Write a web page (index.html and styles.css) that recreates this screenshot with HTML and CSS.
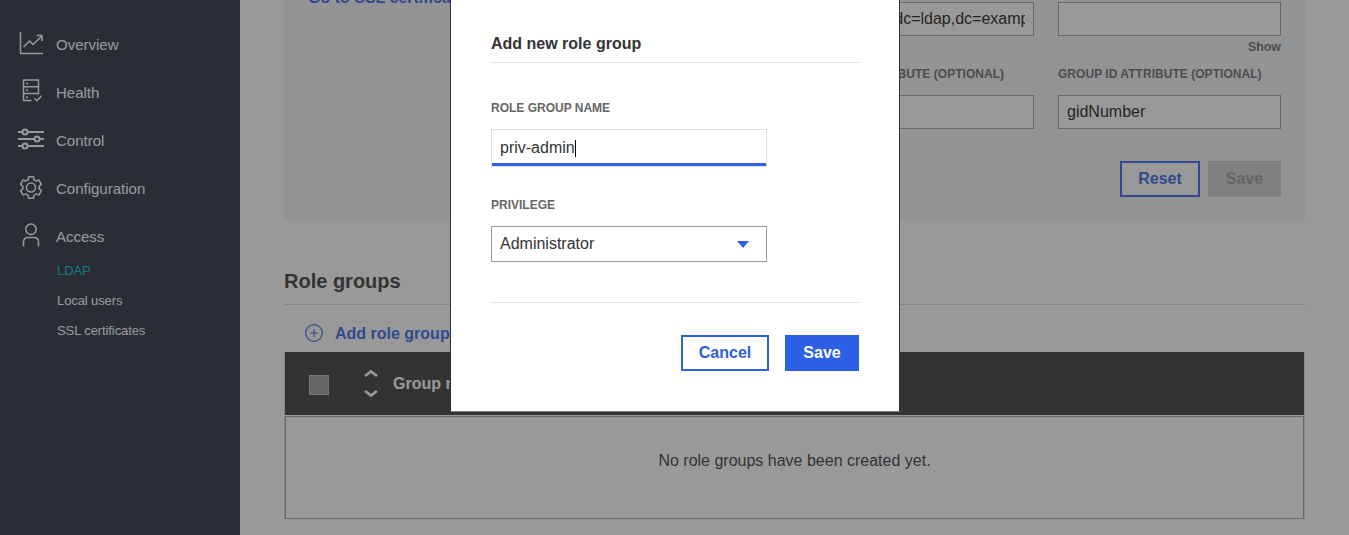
FILE: index.html
```html
<!DOCTYPE html>
<html lang="en">
<head>
<meta charset="utf-8">
<title>LDAP</title>
<link rel="stylesheet" href="styles.css">
</head>
<body>
<div class="app">
  <nav class="sidebar">
    <a class="nav-item"><svg class="nav-icon" viewBox="0 0 26 26"><path d="M2.500 2v21.500H25M5.500 17l6-6 3.500 3.500 9-8.500M18.500 5.500H24v5.500"/></svg><span>Overview</span></a>
    <a class="nav-item"><svg class="nav-icon" viewBox="0 0 26 26"><path d="M13.500 22.500h-8v-20.500h15v14.500M5.500 8.700h15M5.500 15.500h15M8 5.500h2M8 12.200h2M8 19.200h2M16.500 20.500l2.500 2.300 4.500-5"/></svg><span>Health</span></a>
    <a class="nav-item"><svg class="nav-icon thick" viewBox="0 0 26 26"><path d="M0 6h4.500M9.500 6H26M0 13h16.500M21.500 13H26M0 20h4.500M9.500 20H26"/><circle cx="7" cy="6" r="2.500"/><circle cx="19" cy="13" r="2.500"/><circle cx="7" cy="20" r="2.500"/></svg><span>Control</span></a>
    <a class="nav-item"><svg class="nav-icon" viewBox="-13 -13.500 26 26"><path d="M-2.840-7.800L-2.500-10.630H2.500L2.840-7.800 5.330-6.360 7.980-7.480 10.430-3.150 8.170-1.440V1.440L10.430 3.150 7.980 7.480 5.330 6.360 2.840 7.800 2.500 10.630H-2.500L-2.840 7.800-5.330 6.360-7.980 7.480-10.430 3.150-8.170 1.440V-1.440L-10.430-3.150-7.980-7.480-5.330-6.360z"/><circle r="4.500"/></svg><span>Configuration</span></a>
    <a class="nav-item"><svg class="nav-icon" viewBox="0 0 26 26"><circle cx="13" cy="7.300" r="5.200"/><path d="M5.500 24.500v-4.500c0-3 2-4.500 4.500-4.500h6c2.500 0 4.500 1.500 4.500 4.500v4.500"/></svg><span>Access</span></a>
    <div class="subnav"><a class="active">LDAP</a><a>Local users</a><a>SSL certificates</a></div>
  </nav>
  <main class="content">
    <section class="settings">
      <a class="cert-link">Go to SSL certificates</a>
      <div class="fields">
        <div class="field"><div class="input"><div class="value">cn=admin,dc=ldap,dc=example,dc=org</div></div><div class="show"></div><label>USER ID ATTRIBUTE (OPTIONAL)</label><div class="input"></div></div>
        <div class="field"><div class="input"></div><div class="show">Show</div><label>GROUP ID ATTRIBUTE (OPTIONAL)</label><div class="input">gidNumber</div></div>
      </div>
      <div class="actions"><button class="btn outline">Reset</button><button class="btn disabled">Save</button></div>
    </section>
    <h2>Role groups</h2>
    <div class="add"><svg width="18" height="18" viewBox="0 0 18 18"><circle cx="9" cy="9" r="8.300"/><path d="M9 5v8M5 9h8"/></svg><span>Add role group</span></div>
    <div class="table">
      <div class="thead"><i class="checkbox"></i><svg class="sort" width="14" height="30" viewBox="0 0 14 30"><path d="M1 7l6-4.500 6 4.500M1 22l6 4.500 6-4.500"/></svg><span>Group name</span></div>
      <div class="empty">No role groups have been created yet.</div>
    </div>
  </main>
</div>
<div class="overlay"></div>
<div class="modal">
  <h3>Add new role group</h3>
  <label class="role-label">ROLE GROUP NAME</label>
  <div class="modal-input"><span>priv-admin</span><i class="caret"></i></div>
  <label class="privilege-label">PRIVILEGE</label>
  <div class="select"><span>Administrator</span><i class="arrow"></i></div>
  <div class="modal-actions"><button class="btn outline cancel">Cancel</button><button class="btn primary">Save</button></div>
</div>
</body>
</html>
```
FILE: styles.css
```css
* { box-sizing: border-box; }
body { margin: 0; height: 535px; overflow: hidden; background: #fff; color: #333; font: 16px "Liberation Sans", Arial, sans-serif; }
.app { display: flex; height: 535px; }
.sidebar { width: 240px; flex: none; padding-top: 20px; background: #1d2933; color: #fff; }
.nav-item { display: flex; align-items: center; height: 48px; padding-left: 18px; gap: 12px; font-size: 15px; }
.nav-icon { width: 26px; height: 26px; flex: none; margin-top: -3px; fill: none; stroke: #fff; stroke-width: 1.5; stroke-linejoin: round; }
.nav-icon.thick { stroke-width: 2; }
.subnav { display: flex; flex-direction: column; padding: 0 0 0 57px; margin-top: -4px; font-size: 13px; line-height: 30px; letter-spacing: -.1px; }
.subnav .active { color: #00bad1; }
.content { flex: 1; padding: 0 44px 0 45px; margin-left: -1px; }
.settings { position: relative; height: 221px; padding: 2px 24px 0; background: #f0f3f7; }
.cert-link { position: absolute; left: 24px; top: -11px; color: #2d60e5; font-weight: bold; line-height: 18px; }
.fields { display: flex; justify-content: flex-end; gap: 24px; }
.field { width: 223px; }
.input { height: 34px; border: 1px solid #999; background: #fff; color: #111; padding: 0 8px; line-height: 32px; white-space: nowrap; }
.value { overflow: hidden; }
.show { height: 23px; line-height: 23px; text-align: right; font-size: 12.4px; font-weight: bold; color: #666; }
label { display: block; font-size: 12px; font-weight: bold; color: #666; }
.field label { height: 36px; line-height: 30px; white-space: nowrap; letter-spacing: .04px; }
.actions { display: flex; justify-content: flex-end; gap: 8px; margin-top: 32px; }
.btn { height: 36px; padding: 0; border: 0; font: bold 16px "Liberation Sans", Arial, sans-serif; }
.outline { width: 80px; border: 2px solid #2d60e5; background: #fff; color: #2d60e5; }
.disabled { width: 73px; background: #ccc; color: #999; }
h2 { height: 84px; margin: 0; padding-top: 48px; border-bottom: 1px solid #d8d8d8; font-size: 20px; line-height: 24px; }
.add { display: flex; align-items: center; gap: 12px; height: 47px; padding: 9px 0 0 21px; color: #2d60e5; font-weight: bold; }
.add span { padding-top: 2px; }
.add svg { fill: none; stroke: #2d60e5; stroke-width: 1.2; }
.table { height: 167px; border: solid #d8d8d8; border-width: 0 1px; }
.thead { display: flex; align-items: center; height: 63px; padding-left: 24px; background: #333; color: #fff; font-weight: bold; }
.checkbox { width: 20px; height: 20px; margin-top: 3px; background: #999; border: 1px solid #bbb; }
.sort { margin: 0 15px 0 35px; fill: none; stroke: #fff; stroke-width: 2.8; }
.empty { height: 103px; margin-top: 1px; border: 1px solid #999; text-align: center; line-height: 88px; }
.overlay { position: absolute; inset: 0; background: rgba(51,51,51,.5); }
.modal { position: absolute; left: 450px; top: 0; width: 450px; height: 412px; padding: 32px 40px 0; border: solid #333; border-width: 0 1px 1px; border-bottom-color: #777; background: #fff; }
h3 { height: 31px; margin: 0; border-bottom: 1px solid #e2e2e2; font-size: 16px; line-height: 24px; }
.role-label { height: 66px; padding-top: 37px; line-height: 16px; }
.modal-input { display: flex; align-items: center; width: 276px; height: 38px; padding-left: 8px; border: 1px solid #ddd; box-shadow: inset 0 -3px #2d60e5; }
.caret { width: 1px; height: 17px; background: #000; }
.privilege-label { height: 59px; padding-top: 30px; line-height: 16px; }
.select { display: flex; align-items: center; justify-content: space-between; width: 276px; height: 36px; padding: 0 17px 0 8px; border: 1px solid #999; }
.arrow { border: solid transparent; border-width: 7px 6px 0; border-top-color: #2d60e5; }
.modal-actions { display: flex; justify-content: flex-end; gap: 16px; margin-top: 40px; padding-top: 32px; border-top: 1px solid #e2e2e2; }
.cancel { width: 88px; }
.primary { width: 74px; background: #2d60e5; color: #fff; }
```
